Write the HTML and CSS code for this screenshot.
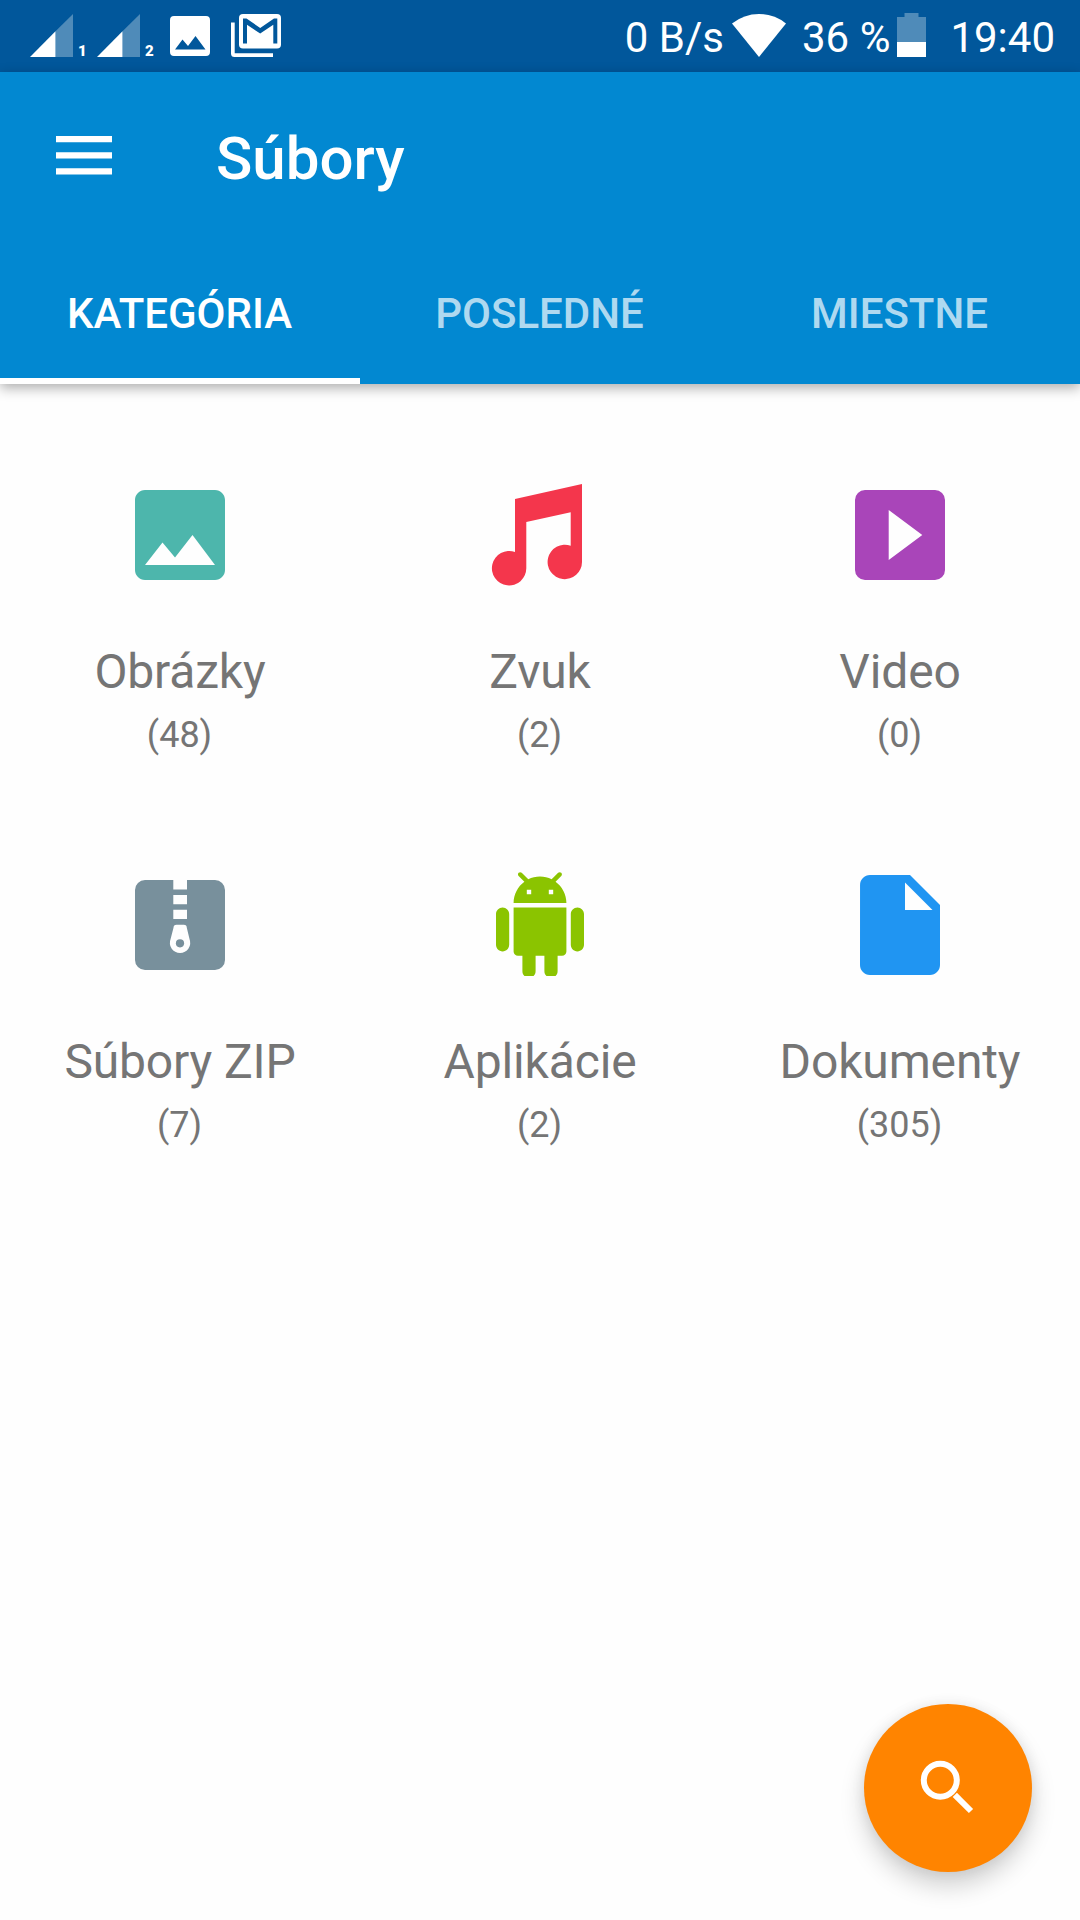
FILE: index.html
```html
<!DOCTYPE html>
<html lang="sk">
<head>
<meta charset="utf-8">
<title>Súbory</title>
<link rel="stylesheet" href="styles.css">
</head>
<body>
<div class="status-bar">
  <div class="notifications">
    <svg class="signal" width="43" height="43" viewBox="0 0 43 43"><path class="dim" d="M25.500 17.200L43 0v43H25.500z"/><path d="M0 43l25.500-25.700V43z"/></svg>
    <span class="sim">1</span>
    <svg class="signal" width="43" height="43" viewBox="0 0 43 43"><path class="dim" d="M25.500 17.200L43 0v43H25.500z"/><path d="M0 43l25.500-25.700V43z"/></svg>
    <span class="sim sim-second">2</span>
    <svg class="picture" width="40" height="40" viewBox="0 0 40 40"><path fill-rule="evenodd" d="M4 0h32a4 4 0 0 1 4 4v32a4 4 0 0 1-4 4H4a4 4 0 0 1-4-4V4a4 4 0 0 1 4-4zM5 33.500h30.500L25.500 20l-7.500 10-5.500-6.500z"/></svg>
    <svg class="mail" width="50" height="43" viewBox="0 0 50 43"><path d="M0 8.500h3.700v30.700H42V43H3.500A3.500 3.500 0 0 1 0 39.500z"/><rect x="8" y="0" width="42" height="34.500" rx="4"/><path class="letter" d="M12 29.500V4.500h3.500L29.200 14 43 4.500h3.300v25h-4V10.700L29.200 19.600 16 10.700v18.800z"/></svg>
  </div>
  <div class="readings">
    <span class="speed">0 B/s</span>
    <svg class="wifi" width="54" height="43" viewBox="0 0 54 43"><path d="M0 9.500Q12 0 27 0t27 9.500L27 43z"/></svg>
    <span class="percent">36 %</span>
    <svg class="battery" width="29" height="44" viewBox="0 0 29 44"><path class="dim" d="M7.500 0h14v4H29v25H0V4h7.500z"/><path d="M0 29h29v15H0z"/></svg>
    <span class="clock">19:40</span>
  </div>
</div>

<header class="app-bar">
  <div class="toolbar">
    <svg class="menu" width="56" height="39" viewBox="0 0 56 39"><path d="M0 0h56v6.300H0zM0 16.200h56v6.300H0zM0 32.300h56v6.300H0z"/></svg>
    <h1 class="title">Súbory</h1>
  </div>
  <nav class="tabs">
    <div class="tab tab-active">KATEGÓRIA</div>
    <div class="tab">POSLEDNÉ</div>
    <div class="tab">MIESTNE</div>
  </nav>
</header>

<main class="categories">
  <div class="category">
    <svg class="icon images" viewBox="0 0 24 24"><path d="M21 19V5c0-1.100-.9-2-2-2H5c-1.100 0-2 .9-2 2v14c0 1.100.9 2 2 2h14c1.100 0 2-.9 2-2zM8.500 13.500l2.500 3.010L14.500 12l4.500 6H5l3.500-4.500z"/></svg>
    <div class="name">Obrázky</div>
    <div class="count">(48)</div>
  </div>
  <div class="category">
    <svg class="icon audio" viewBox="0 0 120 120"><path d="M35 24L102 9v78a17.200 17.200 0 1 1-11.300-16.200V37.300L46.300 47v46.300A17.200 17.200 0 1 1 35 77.100z"/></svg>
    <div class="name">Zvuk</div>
    <div class="count">(2)</div>
  </div>
  <div class="category">
    <svg class="icon video" viewBox="0 0 120 120"><path fill-rule="evenodd" d="M25 15h70a10 10 0 0 1 10 10v70a10 10 0 0 1-10 10H25a10 10 0 0 1-10-10V25a10 10 0 0 1 10-10zM48.700 35v50L82.300 60z"/></svg>
    <div class="name">Video</div>
    <div class="count">(0)</div>
  </div>
  <div class="category">
    <svg class="icon archive" viewBox="0 0 120 120"><path fill-rule="evenodd" d="M25 15h28.300v9.500H67V15h28a10 10 0 0 1 10 10v70a10 10 0 0 1-10 10H25a10 10 0 0 1-10-10V25a10 10 0 0 1 10-10zM53.300 30v9.200H67V30zM53.300 44.700V54H67v-9.300zM56.500 59.700a3 3 0 0 0-3 3L50.600 74a10.200 10.200 0 1 0 18.900 0L66.800 62.700a3 3 0 0 0-3-3z"/><circle cx="60" cy="78.300" r="4.100"/></svg>
    <div class="name">Súbory ZIP</div>
    <div class="count">(7)</div>
  </div>
  <div class="category">
    <svg class="icon apps" viewBox="0 0 120 120"><svg width="120" height="111"><path transform="translate(7.200 7.200) scale(4.400)" d="M6 18c0 .55.45 1 1 1h1v3.500c0 .83.67 1.500 1.500 1.500s1.500-.67 1.500-1.500V19h2v3.500c0 .83.67 1.500 1.500 1.500s1.500-.67 1.500-1.500V19h1c.55 0 1-.45 1-1V8H6v10zM3.500 8C2.670 8 2 8.670 2 9.500v7c0 .83.67 1.500 1.500 1.500S5 17.330 5 16.500v-7C5 8.670 4.330 8 3.500 8zm17 0c-.83 0-1.500.67-1.500 1.500v7c0 .83.67 1.500 1.500 1.500s1.500-.67 1.500-1.500v-7c0-.83-.67-1.500-1.500-1.500zm-4.970-5.840l1.300-1.300c.2-.2.2-.51 0-.71-.2-.2-.51-.2-.71 0l-1.480 1.480C13.850 1.230 12.950 1 12 1c-.96 0-1.860.23-2.660.63L7.850.15c-.2-.2-.51-.2-.71 0-.2.2-.2.51 0 .71l1.310 1.310C6.970 3.260 6 5.010 6 7h12c0-1.990-.97-3.750-2.470-4.840zM10 5H9V4h1v1zm5 0h-1V4h1v1z"/></svg></svg>
    <div class="name">Aplikácie</div>
    <div class="count">(2)</div>
  </div>
  <div class="category">
    <svg class="icon documents" viewBox="0 0 24 24"><path d="M6 2c-1.100 0-1.990.9-1.990 2L4 20c0 1.100.89 2 1.990 2H18c1.100 0 2-.9 2-2V8l-6-6H6zm7 7V3.500L18.500 9H13z"/></svg>
    <div class="name">Dokumenty</div>
    <div class="count">(305)</div>
  </div>
</main>

<div class="fab">
  <svg width="72" height="72" viewBox="0 0 72 72"><circle cx="28.300" cy="28.300" r="16.500"/><path d="M42.800 42.800L59 59"/></svg>
</div>
</body>
</html>
```
FILE: styles.css
```css
* {
  box-sizing: border-box;
}

body {
  margin: 0;
  width: 1080px;
  height: 1920px;
  overflow: hidden;
  position: relative;
  background: #fefefe;
  font-family: Roboto, sans-serif;
}

svg {
  display: block;
  flex: none;
}

/* Status bar */
.status-bar {
  display: flex;
  justify-content: space-between;
  height: 72px;
  padding: 0 25px 0 30px;
  background: #01579b;
  color: #fff;
  fill: #fff;
}

.notifications,
.readings {
  display: flex;
  align-items: flex-start;
}

.dim {
  fill: #4f8bb9;
}

.letter {
  fill: #01579b;
}

.signal {
  margin-top: 14px;
}

.sim {
  width: 24px;
  padding: 42px 0 0 5px;
  font-size: 15px;
  font-weight: 900;
  line-height: 18px;
}

.sim-second {
  width: 30px;
}

.picture {
  margin-top: 16px;
}

.mail {
  margin: 14px 0 0 21px;
}

.readings {
  font-size: 42px;
  line-height: 76px;
  white-space: pre;
}

.wifi {
  margin: 14px 16px 0 8px;
}

.battery {
  margin: 13px 24px 0 7px;
}

/* App bar */
.app-bar {
  height: 312px;
  background: #0288d1;
  color: #fff;
  box-shadow: 0 4px 12px rgba(0, 0, 0, 0.32);
}

.toolbar {
  display: flex;
  align-items: flex-start;
  height: 168px;
  padding-left: 56px;
}

.menu {
  margin-top: 64px;
  fill: #fff;
}

.title {
  margin: 51px 0 0 104px;
  font-size: 60px;
  font-weight: 500;
  line-height: 72px;
}

.tabs {
  display: grid;
  grid-template-columns: repeat(3, 1fr);
  height: 144px;
}

.tab {
  padding: 49px 1px 0 0;
  border-bottom: 6px solid transparent;
  color: rgba(255, 255, 255, 0.7);
  font-size: 42px;
  font-weight: 500;
  line-height: 50px;
  text-align: center;
}

.tab-active {
  border-bottom-color: #fff;
  color: #fff;
}

/* Category grid */
.categories {
  display: grid;
  grid-template-columns: repeat(3, 1fr);
  row-gap: 109px;
  padding-top: 91px;
  color: #757575;
  text-align: center;
}

.icon {
  width: 120px;
  height: 120px;
  margin: 0 auto;
}

.images { fill: #4db6ac; }
.audio { fill: #f4364c; }
.video { fill: #a945b9; }
.archive { fill: #78909c; }
.apps { fill: #8bc400; }
.documents { fill: #2095f2; }

.name {
  margin-top: 49px;
  font-size: 48px;
  letter-spacing: -0.15px;
  line-height: 56px;
}

.count {
  margin-top: 14px;
  padding-right: 1px;
  font-size: 36px;
  line-height: 42px;
}

/* Search button floating over the content */
.fab {
  position: absolute;
  right: 48px;
  bottom: 48px;
  display: flex;
  align-items: center;
  justify-content: center;
  width: 168px;
  height: 168px;
  border-radius: 50%;
  background: #ff8400;
  box-shadow: 0 14px 24px rgba(0, 0, 0, 0.18), 0 0 14px rgba(0, 0, 0, 0.08);
}

.fab svg {
  fill: none;
  stroke: #fff;
  stroke-width: 6;
}
```
